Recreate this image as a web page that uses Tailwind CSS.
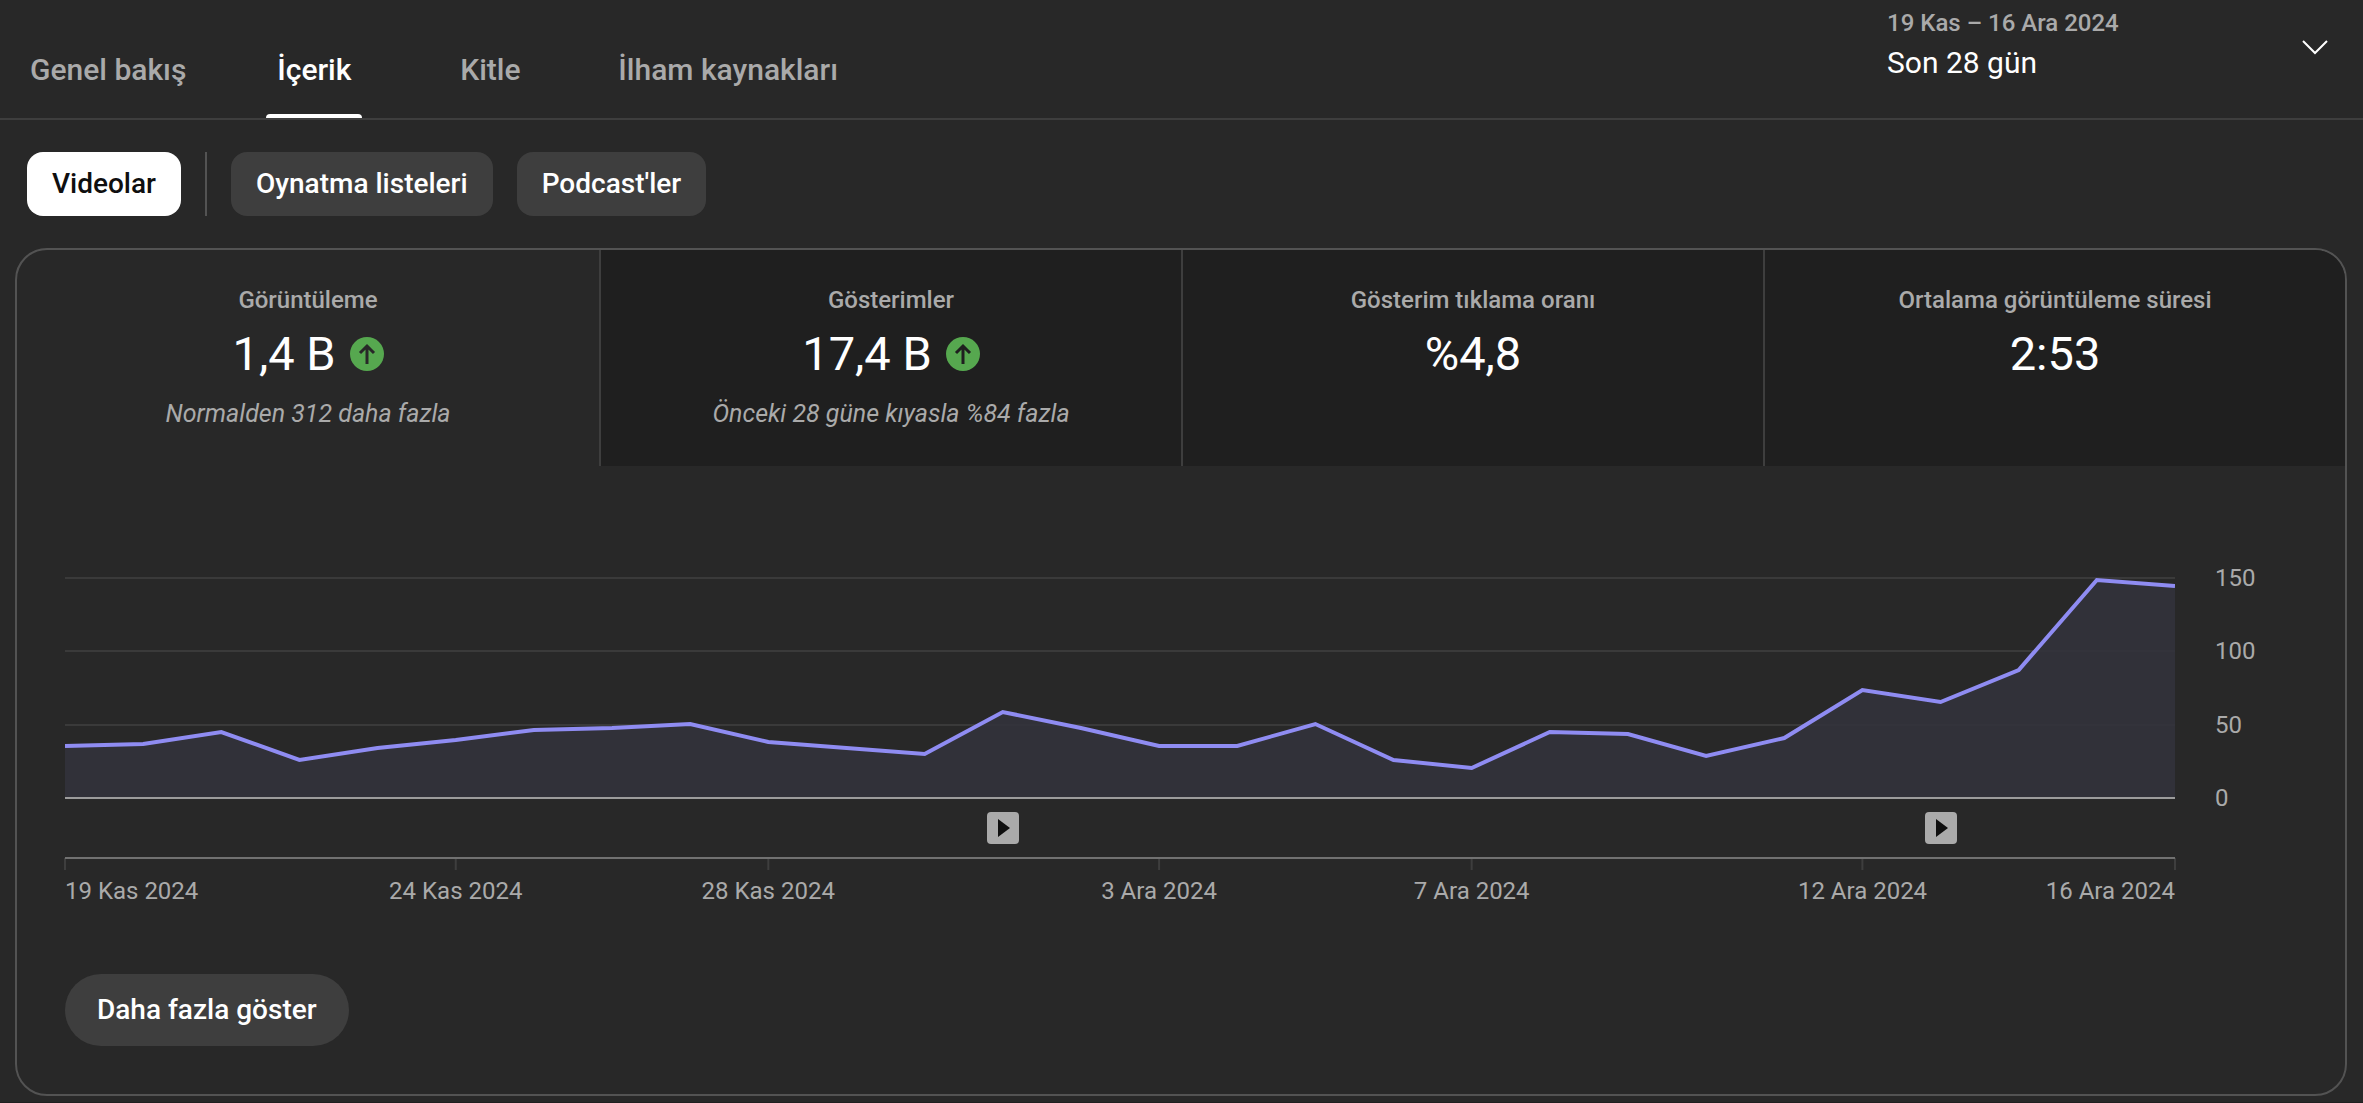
<!DOCTYPE html>
<html lang="tr">
<head>
<meta charset="utf-8">
<title>Kanal analizleri</title>
<script src="https://cdn.jsdelivr.net/npm/@tailwindcss/browser@4"></script>
</head>
<body class="min-h-screen bg-[#282828] font-[Roboto,sans-serif] text-white">
<div class="flex min-h-screen flex-col border-b border-[#1f1f1f]">
  <header class="flex h-30 items-stretch justify-between border-b-2 border-[#3e3e3e]">
    <nav class="flex items-stretch gap-20 pl-[30px] text-center text-[30px] leading-8 font-medium text-[#aaaaaa]">
      <a href="#" class="min-w-24 pt-[54px]">Genel bakış</a>
      <a href="#" aria-current="page" class="flex min-w-24 flex-col justify-between pt-[54px] text-white">İçerik<span class="h-1 rounded-t-sm bg-white"></span></a>
      <a href="#" class="min-w-24 pt-[54px]">Kitle</a>
      <a href="#" class="min-w-24 pt-[54px]">İlham kaynakları</a>
    </nav>
    <button class="flex w-[476px] items-start justify-between pr-6 text-left">
      <span class="flex flex-col pt-[7px]">
        <span class="text-[24px] leading-8 font-medium text-[#aaaaaa]">19 Kas – 16 Ara 2024</span>
        <span class="text-[30px] leading-12">Son 28 gün</span>
      </span>
      <svg class="mt-6 size-12" viewBox="0 0 48 48" fill="none" stroke="#fff" stroke-width="2"><path d="M12 17 24 29 36 17"/></svg>
    </button>
  </header>

  <main class="flex flex-col pt-8 pr-4 pl-[15px]">
    <div class="flex gap-6 pl-3 text-[28px] leading-8 font-medium">
      <button class="h-16 rounded-2xl bg-white px-[25px] text-[#0f0f0f]">Videolar</button>
      <div class="w-[2px] bg-[#535353]"></div>
      <button class="h-16 rounded-2xl bg-[#3e3e3e] px-[25px]">Oynatma listeleri</button>
      <button class="h-16 rounded-2xl bg-[#3e3e3e] px-[25px]">Podcast'ler</button>
    </div>

    <section class="mt-8 overflow-hidden rounded-[32px] border-2 border-[#535353]">
      <div class="grid h-54 grid-cols-4 text-center">
        <button class="flex flex-col items-center pt-[34px]">
          <span class="text-[24px] leading-8 font-medium text-[#aaaaaa]">Görüntüleme</span>
          <span class="mt-[6px] flex items-center gap-[14px] text-[47px] leading-16">1,4 B
            <svg class="size-[34px]" viewBox="0 0 34 34"><circle cx="17" cy="17" r="17" fill="#56a84f"/><path d="M17 27V9M10 16l7-7 7 7" fill="none" stroke="#282828" stroke-width="3"/></svg>
          </span>
          <span class="mt-3 text-[25px] leading-8 text-[#aaaaaa] italic">Normalden 312 daha fazla</span>
        </button>
        <button class="flex flex-col items-center border-l-2 border-[#3e3e3e] bg-[#1f1f1f] pt-[34px]">
          <span class="text-[24px] leading-8 font-medium text-[#aaaaaa]">Gösterimler</span>
          <span class="mt-[6px] flex items-center gap-[14px] text-[47px] leading-16">17,4 B
            <svg class="size-[34px]" viewBox="0 0 34 34"><circle cx="17" cy="17" r="17" fill="#56a84f"/><path d="M17 27V9M10 16l7-7 7 7" fill="none" stroke="#1f1f1f" stroke-width="3"/></svg>
          </span>
          <span class="mt-3 text-[25px] leading-8 text-[#aaaaaa] italic">Önceki 28 güne kıyasla %84 fazla</span>
        </button>
        <button class="flex flex-col items-center border-l-2 border-[#3e3e3e] bg-[#1f1f1f] pt-[34px]">
          <span class="text-[24px] leading-8 font-medium text-[#aaaaaa]">Gösterim tıklama oranı</span>
          <span class="mt-[6px] text-[47px] leading-16">%4,8</span>
        </button>
        <button class="flex flex-col items-center border-l-2 border-[#3e3e3e] bg-[#1f1f1f] pt-[34px]">
          <span class="text-[24px] leading-8 font-medium text-[#aaaaaa]">Ortalama görüntüleme süresi</span>
          <span class="mt-[6px] text-[47px] leading-16">2:53</span>
        </button>
      </div>

      <div class="flex gap-10 pt-[111px] pr-[70px] pl-12 text-[24px] leading-8 text-[#aaaaaa]">
        <div class="min-w-0 flex-1">
          <svg class="block h-[222px] w-full" viewBox="0 0 27 222" preserveAspectRatio="none">
            <path d="M0 1H27M0 74H27M0 148H27" stroke="#3a3a3a" stroke-width="2" vector-effect="non-scaling-stroke"/>
            <path fill="#32323c" fill-opacity=".85" d="M0 169 1 167 2 155 3 183 4 171 5 163 6 153 7 151 8 147 9 165 10 171 11 177 12 135 13 151 14 169 15 169 16 147 17 183 18 191 19 155 20 157 21 179 22 161 23 113 24 125 25 93 26 3 27 9V221H0Z"/>
            <path fill="none" stroke="#8f8cf2" stroke-width="4" vector-effect="non-scaling-stroke" d="M0 169 1 167 2 155 3 183 4 171 5 163 6 153 7 151 8 147 9 165 10 171 11 177 12 135 13 151 14 169 15 169 16 147 17 183 18 191 19 155 20 157 21 179 22 161 23 113 24 125 25 93 26 3 27 9"/>
            <path d="M0 221H27" stroke="#9c9c9c" stroke-width="2" vector-effect="non-scaling-stroke"/>
          </svg>
          <div class="relative h-[58px]">
            <button aria-label="Video" class="absolute top-[13px] -translate-x-1/2" style="left:44.44%">
              <svg class="size-8" viewBox="0 0 32 32"><rect width="32" height="32" rx="4" fill="#aaaaaa"/><path d="M11 7v18l12-9z" fill="#0f0f0f"/></svg>
            </button>
            <button aria-label="Video" class="absolute top-[13px] -translate-x-1/2" style="left:88.89%">
              <svg class="size-8" viewBox="0 0 32 32"><rect width="32" height="32" rx="4" fill="#aaaaaa"/><path d="M11 7v18l12-9z" fill="#0f0f0f"/></svg>
            </button>
          </div>
          <svg class="block h-[13px] w-full overflow-visible" viewBox="0 0 27 13" preserveAspectRatio="none" fill="none" stroke-width="2">
            <path d="M0 1V13M5 1V13M9 1V13M14 1V13M18 1V13M23 1V13M27 1V13" stroke="#3e3e3e" vector-effect="non-scaling-stroke"/>
            <path d="M0 1H27" stroke="#717171" vector-effect="non-scaling-stroke"/>
          </svg>
          <div class="relative mt-[5px] h-8 whitespace-nowrap">
            <span class="absolute left-0">19 Kas 2024</span>
            <span class="absolute -translate-x-1/2" style="left:18.52%">24 Kas 2024</span>
            <span class="absolute -translate-x-1/2" style="left:33.33%">28 Kas 2024</span>
            <span class="absolute -translate-x-1/2" style="left:51.85%">3 Ara 2024</span>
            <span class="absolute -translate-x-1/2" style="left:66.67%">7 Ara 2024</span>
            <span class="absolute -translate-x-1/2" style="left:85.19%">12 Ara 2024</span>
            <span class="absolute right-0">16 Ara 2024</span>
          </div>
        </div>
        <div class="-mt-[15px] flex h-[252px] w-[60px] flex-col justify-between">
          <span>150</span><span>100</span><span>50</span><span>0</span>
        </div>
      </div>

      <div class="px-12 pt-[67px] pb-12">
        <button class="h-18 rounded-full bg-[#3e3e3e] px-8 text-[28px] leading-8 font-medium">Daha fazla göster</button>
      </div>
    </section>
  </main>
</div>
</body>
</html>
